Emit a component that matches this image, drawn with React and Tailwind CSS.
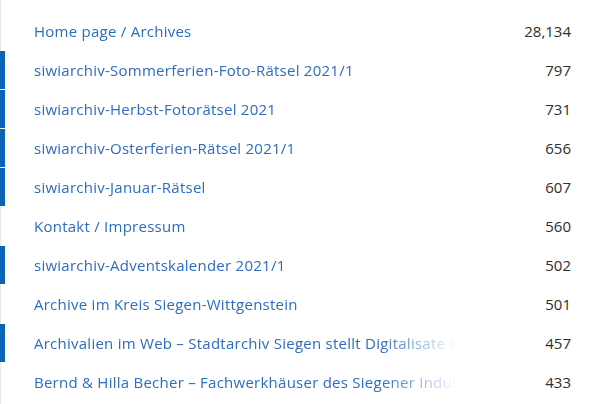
const rows = [
  { title: "Home page / Archives", views: "28,134", bar: false },
  { title: "siwiarchiv-Sommerferien-Foto-Rätsel 2021/1", views: "797", bar: true },
  { title: "siwiarchiv-Herbst-Fotorätsel 2021", views: "731", bar: true },
  { title: "siwiarchiv-Osterferien-Rätsel 2021/1", views: "656", bar: true },
  { title: "siwiarchiv-Januar-Rätsel", views: "607", bar: true },
  { title: "Kontakt / Impressum", views: "560", bar: false },
  { title: "siwiarchiv-Adventskalender 2021/1", views: "502", bar: true },
  { title: "Archive im Kreis Siegen-Wittgenstein", views: "501", bar: false },
  {
    title: "Archivalien im Web – Stadtarchiv Siegen stellt Digitalisate online",
    views: "457",
    bar: true,
  },
  {
    title: "Bernd & Hilla Becher – Fachwerkhäuser des Siegener Industriegebiets",
    views: "433",
    bar: false,
  },
];

function Row({ title, views, bar }) {
  return (
    <div className="flex h-[39px] items-stretch">
      <div className={bar ? "w-[5px] h-[38px] bg-[#0b63b6]" : "w-[5px] h-[38px]"} />
      <div className="flex flex-1 items-center pl-[29px] pr-[29px]">
        <div className="w-[432px] overflow-hidden whitespace-nowrap tracking-[0.25px] text-[#2d6cc0] [mask-image:linear-gradient(to_right,black_80%,transparent_98%)]">
          {title}
        </div>
        <div className="flex-1 text-right text-[#2e2e2e]">{views}</div>
      </div>
    </div>
  );
}

export default function App() {
  return (
    <div
      className="w-[600px] h-[404px] bg-white pt-[12px] text-[15px] shadow-[inset_1px_0_0_#e6e6e6] overflow-hidden"
      style={{ fontFamily: '"Open Sans", "Noto Sans", sans-serif' }}
    >
      {rows.map((r) => (
        <Row key={r.title} {...r} />
      ))}
    </div>
  );
}
